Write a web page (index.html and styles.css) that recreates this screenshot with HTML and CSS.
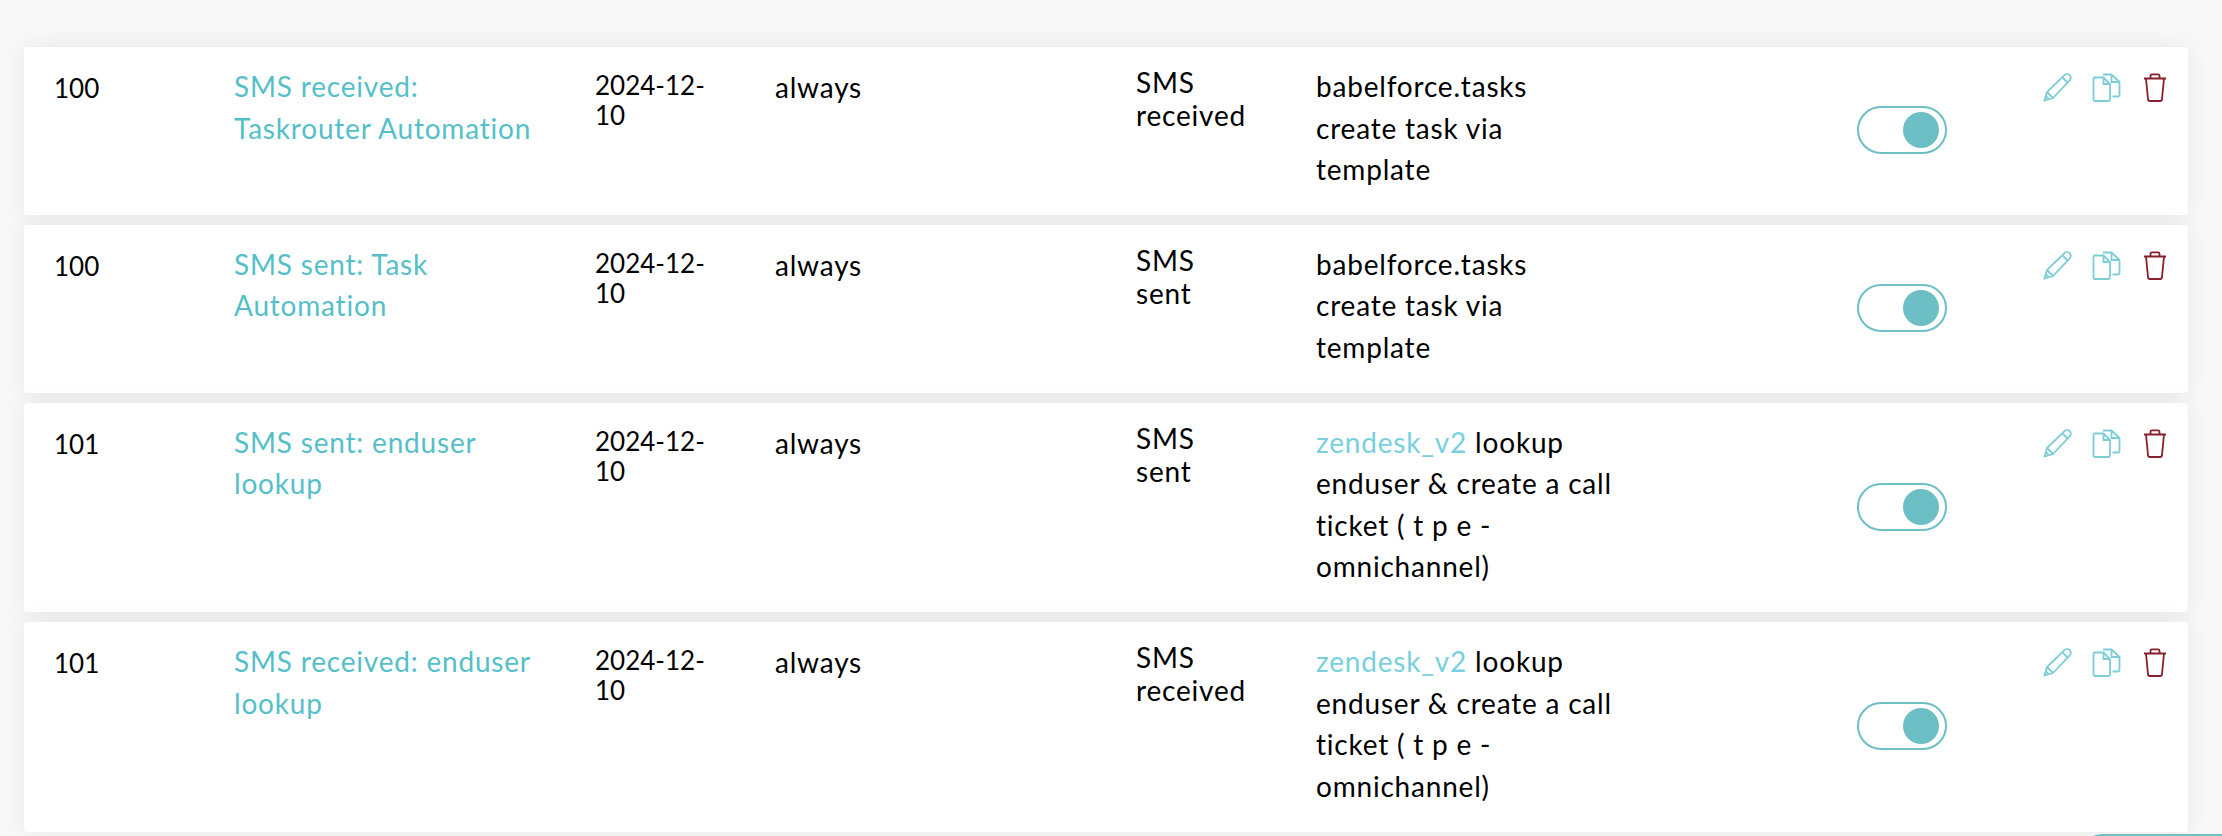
FILE: index.html
```html
<!DOCTYPE html>
<html>
<head>
  <title>Routing rules</title>
  <meta charset="UTF-8">
  <link rel="stylesheet" href="styles.css">
</head>
<body>
  <svg class="icon-defs" width="0" height="0">
    <symbol id="icon-edit" viewBox="0 0 30 30">
      <path d="M1.5 28.5 L4 20 L21.5 3.2 a3.6 3.6 0 0 1 5.2 5.2 L10 26 Z M4 20 L10 26 M2.8 24.2 L5.8 27.2 M19.4 5.3 L24.6 10.5"/>
    </symbol>
    <symbol id="icon-copy" viewBox="0 0 30 30">
      <path d="M3 5.5 H11.5 L18 12 V27.5 a1.5 1.5 0 0 1 -1.5 1.5 H3 a1.5 1.5 0 0 1 -1.5 -1.5 V7 a1.5 1.5 0 0 1 1.5 -1.5 Z M11.5 5.5 V12 H18"/>
      <path d="M11 2.5 H19.5 L27.5 10 V23 a1.5 1.5 0 0 1 -1.5 1.5 H20.5 M19.5 2.5 V10 H27.5"/>
    </symbol>
    <symbol id="icon-delete" viewBox="0 0 28 30">
      <path d="M3 6.5 H25 M9.5 6.5 V3.8 a1.5 1.5 0 0 1 1.5 -1.5 H17 a1.5 1.5 0 0 1 1.5 1.5 V6.5 M5 6.5 L7 27 a2 2 0 0 0 2 2 H19 a2 2 0 0 0 2 -2 L23 6.5"/>
    </symbol>
  </svg>

  <div class="rule-list">
    <div class="rule">
      <div class="priority">100</div>
      <div class="name"><a href="#">SMS received: Taskrouter Automation</a></div>
      <div class="date">2024-12-10</div>
      <div class="when">always</div>
      <div class="trigger">SMS received</div>
      <div class="action">babelforce.tasks create task via template</div>
      <div class="switch-cell"><span class="switch"><span class="knob"></span></span></div>
      <div class="tools">
        <svg class="tool tool-edit"><use href="#icon-edit"/></svg>
        <svg class="tool tool-edit"><use href="#icon-copy"/></svg>
        <svg class="tool tool-delete"><use href="#icon-delete"/></svg>
      </div>
    </div>

    <div class="rule">
      <div class="priority">100</div>
      <div class="name"><a href="#">SMS sent: Task Automation</a></div>
      <div class="date">2024-12-10</div>
      <div class="when">always</div>
      <div class="trigger">SMS sent</div>
      <div class="action">babelforce.tasks create task via template</div>
      <div class="switch-cell"><span class="switch"><span class="knob"></span></span></div>
      <div class="tools">
        <svg class="tool tool-edit"><use href="#icon-edit"/></svg>
        <svg class="tool tool-edit"><use href="#icon-copy"/></svg>
        <svg class="tool tool-delete"><use href="#icon-delete"/></svg>
      </div>
    </div>

    <div class="rule">
      <div class="priority">101</div>
      <div class="name"><a href="#">SMS sent: enduser lookup</a></div>
      <div class="date">2024-12-10</div>
      <div class="when">always</div>
      <div class="trigger">SMS sent</div>
      <div class="action"><a class="app-link" href="#">zendesk_v2</a> lookup enduser &amp; create a call ticket ( t p e - omnichannel)</div>
      <div class="switch-cell"><span class="switch"><span class="knob"></span></span></div>
      <div class="tools">
        <svg class="tool tool-edit"><use href="#icon-edit"/></svg>
        <svg class="tool tool-edit"><use href="#icon-copy"/></svg>
        <svg class="tool tool-delete"><use href="#icon-delete"/></svg>
      </div>
    </div>

    <div class="rule">
      <div class="priority">101</div>
      <div class="name"><a href="#">SMS received: enduser lookup</a></div>
      <div class="date">2024-12-10</div>
      <div class="when">always</div>
      <div class="trigger">SMS received</div>
      <div class="action"><a class="app-link" href="#">zendesk_v2</a> lookup enduser &amp; create a call ticket ( t p e - omnichannel)</div>
      <div class="switch-cell"><span class="switch"><span class="knob"></span></span></div>
      <div class="tools">
        <svg class="tool tool-edit"><use href="#icon-edit"/></svg>
        <svg class="tool tool-edit"><use href="#icon-copy"/></svg>
        <svg class="tool tool-delete"><use href="#icon-delete"/></svg>
      </div>
    </div>
  </div>

  <div class="corner-button"></div>
</body>
</html>
```

FILE: styles.css
```css
html, body {
  height: 100%;
  overflow: hidden;
}

body {
  margin: 0;
  background-color: #f8f8f8;
  font-family: "Lato", "Open Sans", sans-serif;
  font-size: 28px;
  letter-spacing: 0.8px;
  color: #000;
}

a {
  text-decoration: none;
}

.icon-defs {
  position: absolute;
}

.rule-list {
  display: flex;
  flex-direction: column;
  gap: 9.5px;
  padding: 47px 34px 0 24px;
}

.rule {
  display: grid;
  grid-template-columns: 210px 361px 180px 361px 180px 541px 186px 145px;
  background-color: #fff;
  border-radius: 4px;
  box-shadow: 0 0 24px rgba(0, 0, 0, 0.07);
}

.priority {
  padding: 20px 0 0 30px;
  font-size: 26px;
  letter-spacing: 0;
  line-height: 42px;
}

.name {
  padding: 19px 40px 21px 0;
  line-height: 41.6px;
}

.name a {
  color: #55bfc9;
}

.date {
  padding: 23px 50px 0 0;
  font-size: 26px;
  letter-spacing: 0;
  line-height: 30px;
}

.when {
  padding: 19px 0 0 0;
  line-height: 42px;
}

.trigger {
  padding: 19px 64px 0 0;
  line-height: 33px;
}

.action {
  padding: 19px 244px 24.5px 0;
  line-height: 41.6px;
}

.app-link {
  color: #78d0dd;
}

.switch-cell {
  display: flex;
  align-items: center;
  padding-bottom: 2px;
}

.switch {
  display: flex;
  justify-content: flex-end;
  align-items: center;
  box-sizing: border-box;
  width: 90px;
  height: 48px;
  padding-right: 6px;
  border: 2px solid #6cbfc5;
  border-radius: 24px;
}

.knob {
  width: 36px;
  height: 36px;
  border-radius: 50%;
  background-color: #6cbfc5;
}

.tools {
  display: flex;
  gap: 19px;
  padding-top: 25px;
}

.tool {
  width: 30px;
  height: 30px;
  fill: none;
  stroke-width: 1.8;
}

.tool-edit {
  stroke: #7ccdd6;
}

.tool-delete {
  width: 28px;
  stroke: #85202c;
}

/* Кнопка в углу, почти вся за краем окна */
.corner-button {
  position: absolute;
  left: 2082px;
  right: 0;
  top: 834px;
  height: 40px;
  border-radius: 20px 0 0 0;
  background-color: #6cbfc5;
}
```
